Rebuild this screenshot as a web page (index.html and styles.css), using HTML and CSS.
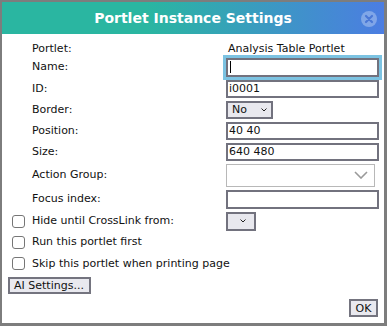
FILE: index.html
```html
<!DOCTYPE html>
<html>
<head>
<meta charset="utf-8">
<link rel="stylesheet" href="styles.css">
</head>
<body>
<div class="dialog">
  <div class="titlebar">
    <span class="title">Portlet Instance Settings</span>
    <span class="close">
      <svg width="16" height="16" viewBox="0 0 16 16"><circle cx="8" cy="8" r="8" fill="#ffffff" fill-opacity="0.3"/><path d="M5 5 L11 11 M11 5 L5 11" stroke="#4a78d6" stroke-width="2.2" stroke-linecap="round"/></svg>
    </span>
  </div>
  <div class="body">
    <div class="form">
      <span class="lbl">Portlet:</span><span class="val text">Analysis Table Portlet</span>
      <span class="lbl">Name:</span><div class="val field focus"><span class="caret"></span></div>
      <span class="lbl">ID:</span><div class="val field">i0001</div>
      <span class="lbl">Border:</span><div class="val sel sel-no">No<svg class="chev" width="6" height="4" viewBox="0 0 6 4"><path d="M0.5 0.5 L3 3 L5.5 0.5" fill="none" stroke="#222" stroke-width="1"/></svg></div>
      <span class="lbl">Position:</span><div class="val field">40 40</div>
      <span class="lbl">Size:</span><div class="val field">640 480</div>
      <span class="lbl">Action Group:</span><div class="val combo"><svg width="14" height="8" viewBox="0 0 14 8"><path d="M1 1 L7 7 L13 1" fill="none" stroke="#9a9a9a" stroke-width="1.6"/></svg></div>
      <span class="lbl">Focus index:</span><div class="val field tall"></div>
      <span class="cb"></span><span class="lbl">Hide until CrossLink from:</span><div class="val sel sel-hide"><svg class="chev" width="6" height="4" viewBox="0 0 6 4"><path d="M0.5 0.5 L3 3 L5.5 0.5" fill="none" stroke="#222" stroke-width="1"/></svg></div>
      <span class="cb"></span><span class="lbl wide">Run this portlet first</span>
      <span class="cb"></span><span class="lbl wide">Skip this portlet when printing page</span>
    </div>
    <div class="actions"><button class="btn ai">AI Settings...</button></div>
    <div class="footer"><button class="btn ok">OK</button></div>
  </div>
</div>
</body>
</html>
```
FILE: styles.css
```css
html, body {
  margin: 0;
  padding: 0;
  background: #ffffff;
}
.dialog {
  width: 387px;
  height: 326px;
  box-sizing: border-box;
  border-style: solid;
  border-color: #7d7d7d;
  border-width: 2px 3px 3px 2px;
  background: #ffffff;
  display: flex;
  flex-direction: column;
  font-family: "DejaVu Sans", sans-serif;
  font-size: 11px;
  color: #111;
}
.titlebar {
  position: relative;
  height: 32px;
  flex: none;
  background: linear-gradient(90deg, #2ab6a1 0%, #2ab6a1 38%, #4c7de2 100%);
  display: flex;
  align-items: center;
  justify-content: center;
}
.title {
  color: #ffffff;
  font-weight: bold;
  font-size: 14px;
  line-height: 32px;
}
.close {
  position: absolute;
  right: 7px;
  top: 9px;
  width: 16px;
  height: 16px;
  display: block;
}
.close svg { display: block; }
.body {
  flex: 1;
  display: flex;
  flex-direction: column;
}
.form {
  display: grid;
  grid-template-columns: 30px 194px 153px;
  grid-template-rows: 15px 22px 21px 21px 21px 21px 26px 22px 22px 20px 23px;
  align-items: center;
  padding-top: 7px;
}
.lbl {
  grid-column: 2;
  white-space: nowrap;
  line-height: 14px;
}
.lbl.wide { grid-column: 2 / 4; }
.val { grid-column: 3; box-sizing: border-box; }
.text { line-height: 14px; padding-left: 2px; }
.field {
  height: 18px;
  width: 153px;
  border: 2px solid #72727e;
  line-height: 14px;
  padding-left: 1px;
  background: #fff;
}
.field.tall { height: 19px; }
.field.focus {
  height: 19px;
  outline: 3px solid #7cc3e2;
  display: flex;
  align-items: center;
}
.caret {
  display: block;
  width: 1px;
  height: 12px;
  margin-left: 1px;
  background: #000;
}
.sel {
  height: 18px;
  background: #e8e8ee;
  border: 2px solid #72727e;
  display: flex;
  align-items: center;
  line-height: 14px;
}
.sel-no { width: 47px; padding-left: 4px; }
.sel-no .chev { margin-left: 14px; }
.sel-hide { width: 30px; height: 19px; padding-left: 12px; }
.combo {
  width: 149px;
  height: 23px;
  border: 1px solid #b8b8b8;
  background: #fff;
  display: flex;
  align-items: center;
  justify-content: flex-end;
  padding-right: 6px;
}
.combo svg, .chev { display: block; }
.cb {
  grid-column: 1;
  width: 13px;
  height: 13px;
  box-sizing: border-box;
  border: 1px solid #767676;
  border-radius: 3px;
  margin-left: 10px;
  background: #fff;
}
.actions {
  padding: 2px 0 0 6px;
  display: flex;
}
.btn {
  font-family: "DejaVu Sans", sans-serif;
  font-size: 11px;
  color: #111;
  background: #e9e9ef;
  border: 2px solid #74747f;
  border-radius: 0;
  margin: 0;
  line-height: 13px;
  box-sizing: border-box;
}
.ai {
  width: 83px;
  height: 17px;
  padding: 0 0 0 4px;
  text-align: left;
}
.footer {
  display: flex;
  justify-content: flex-end;
  padding: 5px 6px 0 0;
}
.ok {
  width: 29px;
  height: 18px;
  padding: 0;
}
```
